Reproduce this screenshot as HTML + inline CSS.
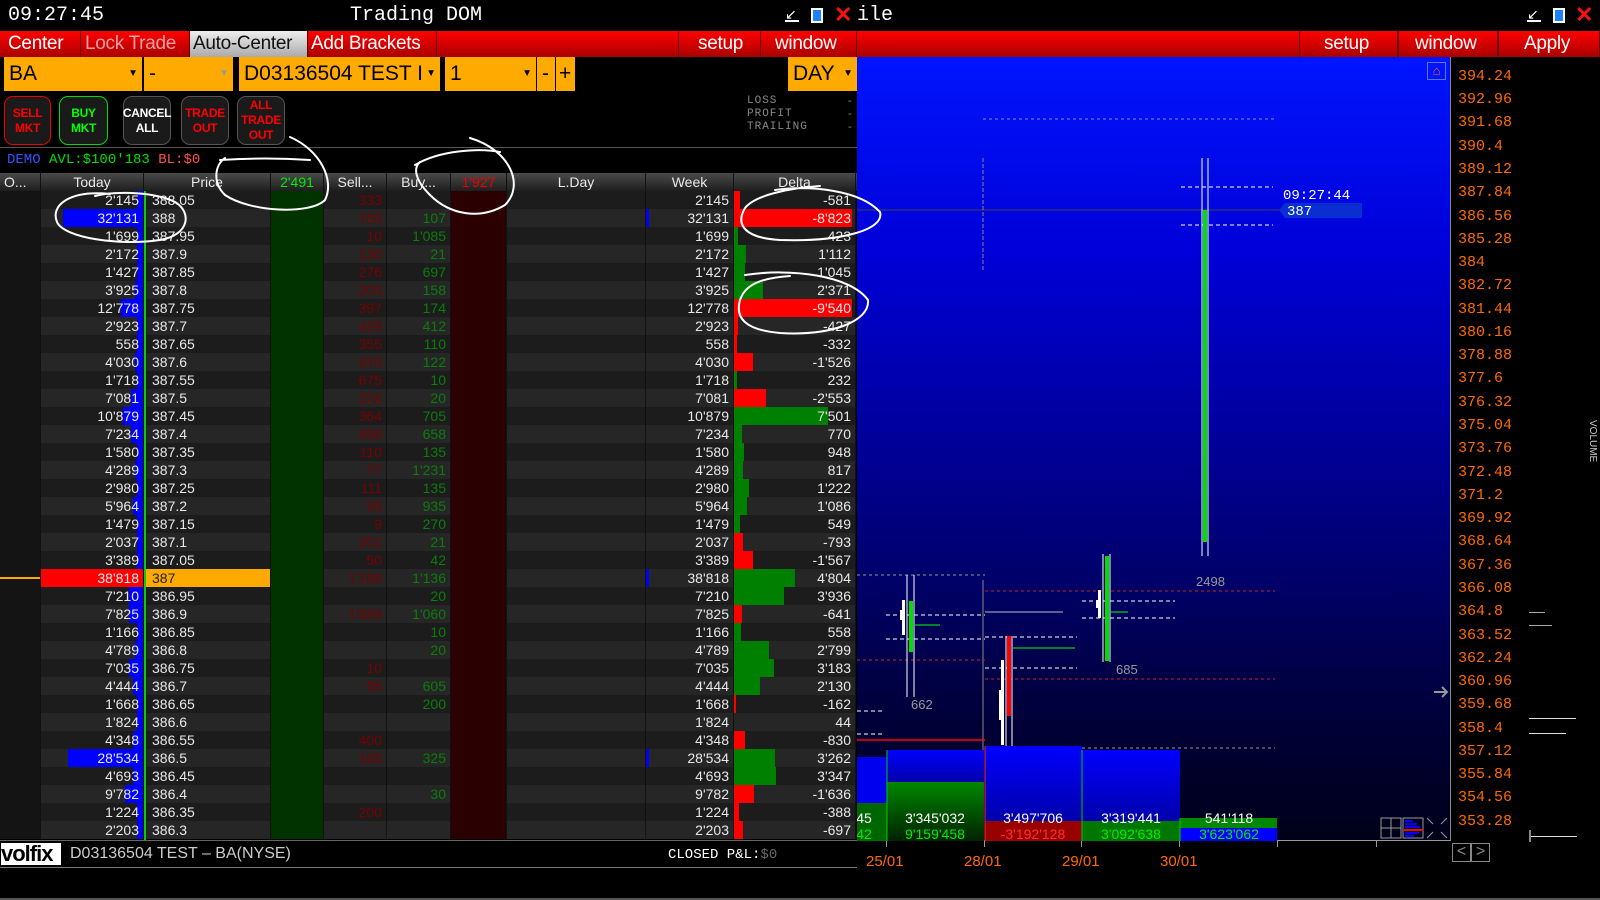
<!DOCTYPE html>
<html><head><meta charset="utf-8"><style>
*{margin:0;padding:0;box-sizing:border-box}
body{width:1600px;height:900px;background:#000;position:relative;overflow:hidden;font-family:"Liberation Sans",sans-serif;color:#e8e8e8}
.a{position:absolute}
.mono{font-family:"Liberation Mono","DejaVu Sans Mono",monospace}
.menu{position:absolute;top:31px;height:26px;background:linear-gradient(#ff0000,#a80000);font-size:19px;line-height:26px;color:#fff;padding-left:8px;border-right:1px solid #600;white-space:nowrap;overflow:hidden;letter-spacing:-0.3px}
.org{position:absolute;top:57px;height:34px;background:#ffaa00;color:#000;font-size:21px;line-height:34px;padding-left:5px;white-space:nowrap;overflow:hidden}
.org .ar{position:absolute;right:4px;top:0;font-size:10px;background:#ffaa00}
.btn{position:absolute;top:96px;height:49px;border-radius:9px;background:#1a1a1a;font-size:12px;line-height:15px;text-align:center;display:flex;align-items:center;justify-content:center;font-weight:bold;letter-spacing:-0.3px}
.r{display:flex;height:18px;font-size:14px;line-height:18px}
.r:nth-child(odd) i{background:#1c1c1c}
.r:nth-child(even) i{background:#262626}
.r i{font-style:normal;position:relative;display:block;border-right:1px solid #111;text-align:right;padding-right:4px;overflow:hidden;white-space:nowrap}
.r i s{text-decoration:none;position:relative}
.o{width:41px}.r .o{background:#141414!important}
.t{width:103px}.p{width:127px;text-align:left!important;padding-left:8px}
.r .g{width:53px;background:#003300!important}.s{width:63px;color:#780000}.b{width:64px;color:#0b7d0b}
.r .rd{width:56px;background:#2a0000!important}.l{width:139px}.w{width:88px}.d{width:122px}
.t b{position:absolute;right:0;top:0;height:18px;background:#0000ff}
.d b{position:absolute;left:0;top:0;height:18px;background:#008000}
.d b.n{background:#ff0000}
.w b{position:absolute;left:0;top:0;width:3px;height:18px;background:#0000ff}
.hd{display:flex;height:18px;font-size:14px;line-height:18px;background:linear-gradient(#4a4a4a,#1e1e1e)}
.hd i{font-style:normal;display:block;text-align:center;border-right:1px solid #111;white-space:nowrap;overflow:hidden}
.ax{position:absolute;left:1458px;color:#ff6a00;font-size:15px;font-family:"Liberation Mono",monospace}
</style></head><body>
<div class="a mono" style="left:8px;top:4px;font-size:20px;color:#fff">09:27:45</div>
<div class="a mono" style="left:350px;top:4px;font-size:20px;color:#fff">Trading DOM</div>
<div class="a" style="left:785px;top:8px;width:14px;height:14px;border-bottom:2px solid #fff;color:#fff;font-size:14px;line-height:12px">↙</div>
<div class="a" style="left:811px;top:8px;width:12px;height:15px;background:#1e7fff;border:2px solid #fff"></div>
<div class="a" style="left:834px;top:2px;color:#ff1010;font-size:22px;font-weight:bold">✕</div>
<div class="a mono" style="left:857px;top:4px;font-size:20px;color:#fff">ile</div>
<div class="a" style="left:1527px;top:8px;width:14px;height:14px;border-bottom:2px solid #fff;color:#fff;font-size:14px;line-height:12px">↙</div>
<div class="a" style="left:1553px;top:8px;width:12px;height:15px;background:#1e7fff;border:2px solid #fff"></div>
<div class="a" style="left:1575px;top:2px;color:#ff1010;font-size:22px;font-weight:bold">✕</div>
<div class="a" style="left:0;top:31px;width:1600px;height:26px;background:linear-gradient(#ff0000,#a80000)"></div>
<div class="menu" style="left:0;width:81px">Center</div>
<div class="menu" style="left:81px;width:109px;color:#e8a0a0;padding-left:4px">Lock Trade</div>
<div class="menu" style="left:190px;width:118px;background:linear-gradient(#eee,#aaa);color:#111;padding-left:3px">Auto-Center</div>
<div class="menu" style="left:308px;width:129px;padding-left:3px">Add Brackets</div>
<div class="menu" style="left:678px;width:83px;padding-left:19px;border-left:1px solid #600">setup</div>
<div class="menu" style="left:761px;width:96px;padding-left:14px">window</div>
<div class="menu" style="left:1299px;width:99px;padding-left:24px;border-left:1px solid #600">setup</div>
<div class="menu" style="left:1398px;width:100px;padding-left:16px;border-left:1px solid #600">window</div>
<div class="menu" style="left:1498px;width:102px;padding-left:25px;border-left:1px solid #600">Apply</div>
<div class="org" style="left:4px;width:138px">BA<span class="ar">▼</span></div>
<div class="org" style="left:144px;width:89px">-<span class="ar" style="color:#999">▼</span></div>
<div class="org" style="left:239px;width:201px">D03136504 TEST I<span class="ar">▼</span></div>
<div class="org" style="left:445px;width:91px">1<span class="ar">▼</span></div>
<div class="org" style="left:537px;width:18px">-</div>
<div class="org" style="left:556px;width:19px;padding-left:3px">+</div>
<div class="org" style="left:788px;width:69px">DAY<span class="ar">▼</span></div>
<div class="btn" style="left:4px;width:47px;border:1px solid #e00;color:#f00">SELL<br>MKT</div>
<div class="btn" style="left:59px;width:49px;border:1px solid #0d0;color:#0f0">BUY<br>MKT</div>
<div class="btn" style="left:123px;width:48px;border:1px solid #555;color:#fff">CANCEL<br>ALL</div>
<div class="btn" style="left:181px;width:48px;border:1px solid #555;color:#f00">TRADE<br>OUT</div>
<div class="btn" style="left:237px;width:48px;border:1px solid #555;color:#f00">ALL<br>TRADE<br>OUT</div>
<div class="a mono" style="left:747px;top:95px;font-size:11px;line-height:13px;color:#888;letter-spacing:1px">LOSS<br>PROFIT<br>TRAILING</div>
<div class="a" style="left:848px;top:95px;font-size:11px;line-height:13px;color:#888">-<br>-<br>-</div>
<div class="a" style="left:0;top:147px;width:857px;height:1px;background:#555"></div>
<div class="a mono" style="left:7px;top:152px;font-size:14px"><span style="color:#3355ff">DEMO</span> <span style="color:#00e000">AVL:$100'183</span> <span style="color:#ff5050">BL:$0</span></div>
<div class="a" style="left:0;top:173px;width:857px">
<div class="hd"><i style="width:41px;text-align:left;padding-left:4px">O...</i><i style="width:103px">Today</i><i style="width:127px">Price</i><i style="width:53px;color:#0e0">2'491</i><i style="width:63px">Sell...</i><i style="width:64px">Buy...</i><i style="width:56px;color:#e00">1'927</i><i style="width:139px">L.Day</i><i style="width:88px">Week</i><i style="width:122px">Delta</i></div>
<div>
<div class="r"><i class="o"></i><i class="t"><b style="width:6px"></b><s>2'145</s></i><i class="p">388.05</i><i class="g"></i><i class="s">333</i><i class="b"></i><i class="rd"></i><i class="l"></i><i class="w">2'145</i><i class="d"><b class="n" style="width:6px"></b><s>-581</s></i></div>
<div class="r"><i class="o"></i><i class="t"><b style="width:80px"></b><s>32'131</s></i><i class="p">388</i><i class="g"></i><i class="s">745</i><i class="b">107</i><i class="rd"></i><i class="l"></i><i class="w"><b></b>32'131</i><i class="d"><b class="n" style="width:118px"></b><s>-8'823</s></i></div>
<div class="r"><i class="o"></i><i class="t"><b style="width:6px"></b><s>1'699</s></i><i class="p">387.95</i><i class="g"></i><i class="s">10</i><i class="b">1'085</i><i class="rd"></i><i class="l"></i><i class="w">1'699</i><i class="d"><b style="width:4px"></b><s>423</s></i></div>
<div class="r"><i class="o"></i><i class="t"><b style="width:6px"></b><s>2'172</s></i><i class="p">387.9</i><i class="g"></i><i class="s">130</i><i class="b">21</i><i class="rd"></i><i class="l"></i><i class="w">2'172</i><i class="d"><b style="width:12px"></b><s>1'112</s></i></div>
<div class="r"><i class="o"></i><i class="t"><b style="width:6px"></b><s>1'427</s></i><i class="p">387.85</i><i class="g"></i><i class="s">276</i><i class="b">697</i><i class="rd"></i><i class="l"></i><i class="w">1'427</i><i class="d"><b style="width:11px"></b><s>1'045</s></i></div>
<div class="r"><i class="o"></i><i class="t"><b style="width:8px"></b><s>3'925</s></i><i class="p">387.8</i><i class="g"></i><i class="s">205</i><i class="b">158</i><i class="rd"></i><i class="l"></i><i class="w">3'925</i><i class="d"><b style="width:29px"></b><s>2'371</s></i></div>
<div class="r"><i class="o"></i><i class="t"><b style="width:22px"></b><s>12'778</s></i><i class="p">387.75</i><i class="g"></i><i class="s">397</i><i class="b">174</i><i class="rd"></i><i class="l"></i><i class="w">12'778</i><i class="d"><b class="n" style="width:118px"></b><s>-9'540</s></i></div>
<div class="r"><i class="o"></i><i class="t"><b style="width:6px"></b><s>2'923</s></i><i class="p">387.7</i><i class="g"></i><i class="s">429</i><i class="b">412</i><i class="rd"></i><i class="l"></i><i class="w">2'923</i><i class="d"><b class="n" style="width:4px"></b><s>-427</s></i></div>
<div class="r"><i class="o"></i><i class="t"><b style="width:6px"></b><s>558</s></i><i class="p">387.65</i><i class="g"></i><i class="s">355</i><i class="b">110</i><i class="rd"></i><i class="l"></i><i class="w">558</i><i class="d"><b class="n" style="width:3px"></b><s>-332</s></i></div>
<div class="r"><i class="o"></i><i class="t"><b style="width:8px"></b><s>4'030</s></i><i class="p">387.6</i><i class="g"></i><i class="s">970</i><i class="b">122</i><i class="rd"></i><i class="l"></i><i class="w">4'030</i><i class="d"><b class="n" style="width:19px"></b><s>-1'526</s></i></div>
<div class="r"><i class="o"></i><i class="t"><b style="width:6px"></b><s>1'718</s></i><i class="p">387.55</i><i class="g"></i><i class="s">675</i><i class="b">10</i><i class="rd"></i><i class="l"></i><i class="w">1'718</i><i class="d"><b style="width:3px"></b><s>232</s></i></div>
<div class="r"><i class="o"></i><i class="t"><b style="width:12px"></b><s>7'081</s></i><i class="p">387.5</i><i class="g"></i><i class="s">224</i><i class="b">20</i><i class="rd"></i><i class="l"></i><i class="w">7'081</i><i class="d"><b class="n" style="width:32px"></b><s>-2'553</s></i></div>
<div class="r"><i class="o"></i><i class="t"><b style="width:20px"></b><s>10'879</s></i><i class="p">387.45</i><i class="g"></i><i class="s">364</i><i class="b">705</i><i class="rd"></i><i class="l"></i><i class="w">10'879</i><i class="d"><b style="width:94px"></b><s>7'501</s></i></div>
<div class="r"><i class="o"></i><i class="t"><b style="width:12px"></b><s>7'234</s></i><i class="p">387.4</i><i class="g"></i><i class="s">456</i><i class="b">658</i><i class="rd"></i><i class="l"></i><i class="w">7'234</i><i class="d"><b style="width:8px"></b><s>770</s></i></div>
<div class="r"><i class="o"></i><i class="t"><b style="width:6px"></b><s>1'580</s></i><i class="p">387.35</i><i class="g"></i><i class="s">110</i><i class="b">135</i><i class="rd"></i><i class="l"></i><i class="w">1'580</i><i class="d"><b style="width:10px"></b><s>948</s></i></div>
<div class="r"><i class="o"></i><i class="t"><b style="width:8px"></b><s>4'289</s></i><i class="p">387.3</i><i class="g"></i><i class="s">77</i><i class="b">1'231</i><i class="rd"></i><i class="l"></i><i class="w">4'289</i><i class="d"><b style="width:9px"></b><s>817</s></i></div>
<div class="r"><i class="o"></i><i class="t"><b style="width:6px"></b><s>2'980</s></i><i class="p">387.25</i><i class="g"></i><i class="s">111</i><i class="b">135</i><i class="rd"></i><i class="l"></i><i class="w">2'980</i><i class="d"><b style="width:15px"></b><s>1'222</s></i></div>
<div class="r"><i class="o"></i><i class="t"><b style="width:10px"></b><s>5'964</s></i><i class="p">387.2</i><i class="g"></i><i class="s">95</i><i class="b">935</i><i class="rd"></i><i class="l"></i><i class="w">5'964</i><i class="d"><b style="width:13px"></b><s>1'086</s></i></div>
<div class="r"><i class="o"></i><i class="t"><b style="width:6px"></b><s>1'479</s></i><i class="p">387.15</i><i class="g"></i><i class="s">9</i><i class="b">270</i><i class="rd"></i><i class="l"></i><i class="w">1'479</i><i class="d"><b style="width:6px"></b><s>549</s></i></div>
<div class="r"><i class="o"></i><i class="t"><b style="width:6px"></b><s>2'037</s></i><i class="p">387.1</i><i class="g"></i><i class="s">201</i><i class="b">21</i><i class="rd"></i><i class="l"></i><i class="w">2'037</i><i class="d"><b class="n" style="width:9px"></b><s>-793</s></i></div>
<div class="r"><i class="o"></i><i class="t"><b style="width:6px"></b><s>3'389</s></i><i class="p">387.05</i><i class="g"></i><i class="s">50</i><i class="b">42</i><i class="rd"></i><i class="l"></i><i class="w">3'389</i><i class="d"><b class="n" style="width:19px"></b><s>-1'567</s></i></div>
<div class="r"><i class="o"><span style="position:absolute;left:0;top:8px;width:41px;height:2px;background:#ffaa00"></span></i><i class="t"><b style="width:103px;background:#ff0000"></b><s>38'818</s></i><i class="p" style="background:#ffaa00!important;color:#222">387</i><i class="g"></i><i class="s">1'188</i><i class="b">1'136</i><i class="rd"></i><i class="l"></i><i class="w"><b></b>38'818</i><i class="d"><b style="width:61px"></b><s>4'804</s></i></div>
<div class="r"><i class="o"></i><i class="t"><b style="width:14px"></b><s>7'210</s></i><i class="p">386.95</i><i class="g"></i><i class="s"></i><i class="b">20</i><i class="rd"></i><i class="l"></i><i class="w">7'210</i><i class="d"><b style="width:50px"></b><s>3'936</s></i></div>
<div class="r"><i class="o"></i><i class="t"><b style="width:14px"></b><s>7'825</s></i><i class="p">386.9</i><i class="g"></i><i class="s">1'689</i><i class="b">1'060</i><i class="rd"></i><i class="l"></i><i class="w">7'825</i><i class="d"><b class="n" style="width:8px"></b><s>-641</s></i></div>
<div class="r"><i class="o"></i><i class="t"><b style="width:6px"></b><s>1'166</s></i><i class="p">386.85</i><i class="g"></i><i class="s"></i><i class="b">10</i><i class="rd"></i><i class="l"></i><i class="w">1'166</i><i class="d"><b style="width:7px"></b><s>558</s></i></div>
<div class="r"><i class="o"></i><i class="t"><b style="width:8px"></b><s>4'789</s></i><i class="p">386.8</i><i class="g"></i><i class="s"></i><i class="b">20</i><i class="rd"></i><i class="l"></i><i class="w">4'789</i><i class="d"><b style="width:35px"></b><s>2'799</s></i></div>
<div class="r"><i class="o"></i><i class="t"><b style="width:14px"></b><s>7'035</s></i><i class="p">386.75</i><i class="g"></i><i class="s">10</i><i class="b"></i><i class="rd"></i><i class="l"></i><i class="w">7'035</i><i class="d"><b style="width:40px"></b><s>3'183</s></i></div>
<div class="r"><i class="o"></i><i class="t"><b style="width:10px"></b><s>4'444</s></i><i class="p">386.7</i><i class="g"></i><i class="s">95</i><i class="b">605</i><i class="rd"></i><i class="l"></i><i class="w">4'444</i><i class="d"><b style="width:26px"></b><s>2'130</s></i></div>
<div class="r"><i class="o"></i><i class="t"><b style="width:6px"></b><s>1'668</s></i><i class="p">386.65</i><i class="g"></i><i class="s"></i><i class="b">200</i><i class="rd"></i><i class="l"></i><i class="w">1'668</i><i class="d"><b class="n" style="width:2px"></b><s>-162</s></i></div>
<div class="r"><i class="o"></i><i class="t"><b style="width:6px"></b><s>1'824</s></i><i class="p">386.6</i><i class="g"></i><i class="s"></i><i class="b"></i><i class="rd"></i><i class="l"></i><i class="w">1'824</i><i class="d"><s>44</s></i></div>
<div class="r"><i class="o"></i><i class="t"><b style="width:10px"></b><s>4'348</s></i><i class="p">386.55</i><i class="g"></i><i class="s">400</i><i class="b"></i><i class="rd"></i><i class="l"></i><i class="w">4'348</i><i class="d"><b class="n" style="width:11px"></b><s>-830</s></i></div>
<div class="r"><i class="o"></i><i class="t"><b style="width:75px"></b><s>28'534</s></i><i class="p">386.5</i><i class="g"></i><i class="s">165</i><i class="b">325</i><i class="rd"></i><i class="l"></i><i class="w"><b></b>28'534</i><i class="d"><b style="width:41px"></b><s>3'262</s></i></div>
<div class="r"><i class="o"></i><i class="t"><b style="width:10px"></b><s>4'693</s></i><i class="p">386.45</i><i class="g"></i><i class="s"></i><i class="b"></i><i class="rd"></i><i class="l"></i><i class="w">4'693</i><i class="d"><b style="width:42px"></b><s>3'347</s></i></div>
<div class="r"><i class="o"></i><i class="t"><b style="width:18px"></b><s>9'782</s></i><i class="p">386.4</i><i class="g"></i><i class="s"></i><i class="b">30</i><i class="rd"></i><i class="l"></i><i class="w">9'782</i><i class="d"><b class="n" style="width:20px"></b><s>-1'636</s></i></div>
<div class="r"><i class="o"></i><i class="t"><b style="width:6px"></b><s>1'224</s></i><i class="p">386.35</i><i class="g"></i><i class="s">200</i><i class="b"></i><i class="rd"></i><i class="l"></i><i class="w">1'224</i><i class="d"><b class="n" style="width:5px"></b><s>-388</s></i></div>
<div class="r"><i class="o"></i><i class="t"><b style="width:6px"></b><s>2'203</s></i><i class="p">386.3</i><i class="g"></i><i class="s"></i><i class="b"></i><i class="rd"></i><i class="l"></i><i class="w">2'203</i><i class="d"><b class="n" style="width:9px"></b><s>-697</s></i></div>
</div></div>
<div class="a" style="left:144px;top:191px;width:2px;height:649px;background:#00d000"></div>
<div class="a" style="left:0;top:840px;width:857px;height:1px;background:#666"></div>
<div class="a" style="left:0;top:841px;width:857px;height:27px;background:#000;border-bottom:1px solid #777"></div>
<div class="a" style="left:1px;top:843px;width:60px;height:22px;background:#fff;color:#000;font-weight:bold;font-size:22px;line-height:22px;letter-spacing:-1px">volfix</div>
<div class="a" style="left:70px;top:845px;font-size:16px;color:#ccc">D03136504 TEST – BA(NYSE)</div>
<div class="a mono" style="left:668px;top:847px;font-size:14px;color:#fff">CLOSED P&amp;L:<span style="color:#666">$0</span></div>
<div class="a" style="left:0;top:898px;width:1600px;height:2px;background:#555"></div>
<div class="a" style="left:857px;top:57px;width:593px;height:783px;background:linear-gradient(#0015ff 0%,#0000d8 25%,#00008a 55%,#000044 80%,#000018 100%)"></div>
<div class="a" style="left:1450px;top:57px;width:1px;height:785px;background:#888"></div>
<div class="a" style="left:857px;top:840px;width:594px;height:1px;background:#999"></div>
<div class="a" style="left:1427px;top:62px;width:19px;height:18px;border:1px solid #5577ff;color:#ff6600;font-size:13px;text-align:center">⌂</div>
<svg class="a" style="left:857px;top:57px" width="595" height="800" viewBox="857 57 595 800">
<g fill="none" stroke-width="1">
<line x1="983" y1="119" x2="1275" y2="119" stroke="#8888ff" stroke-dasharray="3,3"/>
<line x1="857" y1="210" x2="1279" y2="210" stroke="#444"/>
<line x1="983" y1="158" x2="983" y2="270" stroke="#888" stroke-dasharray="4,2"/>
<line x1="983" y1="580" x2="983" y2="840" stroke="#888"/>
<line x1="1181" y1="187" x2="1273" y2="187" stroke="#fff" stroke-dasharray="4,3"/>
<line x1="1181" y1="225" x2="1273" y2="225" stroke="#fff" stroke-dasharray="4,3"/>
<line x1="1202" y1="158" x2="1202" y2="556" stroke="#fff"/>
<line x1="1208" y1="158" x2="1208" y2="556" stroke="#fff"/>
<line x1="857" y1="575" x2="985" y2="575" stroke="#999" stroke-dasharray="3,3"/>
<line x1="985" y1="591" x2="1275" y2="591" stroke="#cc2222" stroke-dasharray="3,3"/>
<line x1="985" y1="679" x2="1275" y2="679" stroke="#cc2222" stroke-dasharray="3,3"/>
<line x1="857" y1="660" x2="985" y2="660" stroke="#cc2222" stroke-dasharray="3,3"/>
<line x1="857" y1="740" x2="985" y2="740" stroke="#ff0000" stroke-width="1.5"/>
<line x1="1082" y1="748" x2="1275" y2="748" stroke="#999" stroke-dasharray="3,3"/>
<line x1="886" y1="615" x2="985" y2="615" stroke="#fff" stroke-dasharray="4,3"/>
<line x1="886" y1="639" x2="985" y2="639" stroke="#fff" stroke-dasharray="4,3"/>
<line x1="857" y1="711" x2="884" y2="711" stroke="#fff" stroke-dasharray="4,3"/>
<line x1="857" y1="734" x2="884" y2="734" stroke="#fff" stroke-dasharray="4,3"/>
<line x1="985" y1="637" x2="1077" y2="637" stroke="#fff" stroke-dasharray="4,3"/>
<line x1="985" y1="668" x2="1077" y2="668" stroke="#fff" stroke-dasharray="4,3"/>
<line x1="1082" y1="601" x2="1175" y2="601" stroke="#fff" stroke-dasharray="4,3"/>
<line x1="1082" y1="618" x2="1175" y2="618" stroke="#fff" stroke-dasharray="4,3"/>
<line x1="985" y1="612" x2="1063" y2="612" stroke="#bbb"/>
<line x1="915" y1="625" x2="940" y2="625" stroke="#0f0"/>
<line x1="1013" y1="648" x2="1075" y2="648" stroke="#0f0"/>
<line x1="1111" y1="612" x2="1128" y2="612" stroke="#0f0"/>
<line x1="907" y1="575" x2="907" y2="697" stroke="#fff"/><line x1="914" y1="575" x2="914" y2="697" stroke="#fff"/>
<line x1="1006" y1="636" x2="1006" y2="750" stroke="#fff"/><line x1="1012" y1="636" x2="1012" y2="750" stroke="#fff"/>
<line x1="1103" y1="554" x2="1103" y2="662" stroke="#fff"/><line x1="1110" y1="554" x2="1110" y2="662" stroke="#fff"/>
</g>
<rect x="1203" y="210" width="4" height="332" fill="#00e000"/>
<rect x="909" y="601" width="4" height="51" fill="#00e000"/>
<rect x="1007" y="636" width="4" height="80" fill="#ff0000"/>
<rect x="1105" y="556" width="4" height="105" fill="#00e000"/>
<path d="M905 600h-3v10h-2v10h2v15h3z M1004 660h-3v30h-2v30h2v25h3z M1101 590h-3v10h-2v8h2v10h3z" fill="#fff"/>
<path d="M1279 210 l6 -7 h77 v15 h-77z" fill="#0a2fd0"/>
<text x="1283" y="199" fill="#fff" font-family="Liberation Mono" font-size="14">09:27:44</text>
<text x="1287" y="215" fill="#fff" font-family="Liberation Mono" font-size="14">387</text>
<g fill="#999" font-family="Liberation Sans" font-size="13"><text x="911" y="709">662</text><text x="1019" y="761">608</text><text x="1116" y="674">685</text><text x="1196" y="586">2498</text></g>
<rect x="857" y="757" width="30" height="46" fill="#0000ee"/><rect x="857" y="803" width="30" height="38" fill="#006600"/>
<defs><linearGradient id="gg" x1="0" y1="0" x2="0" y2="1"><stop offset="0" stop-color="#008800"/><stop offset="1" stop-color="#002200"/></linearGradient><linearGradient id="bb" x1="0" y1="0" x2="0" y2="1"><stop offset="0" stop-color="#0000ff"/><stop offset="1" stop-color="#0000aa"/></linearGradient></defs>
<rect x="887" y="750" width="97" height="32" fill="url(#bb)"/><rect x="887" y="782" width="97" height="59" fill="url(#gg)"/>
<rect x="985" y="746" width="97" height="75" fill="url(#bb)"/><rect x="985" y="821" width="97" height="20" fill="#990000"/>
<rect x="1082" y="750" width="98" height="71" fill="url(#bb)"/><rect x="1082" y="821" width="98" height="20" fill="#007700"/>
<rect x="1180" y="818" width="97" height="10" fill="#008800"/><rect x="1180" y="828" width="97" height="13" fill="#0000ff"/>
<g stroke="#00cc00"><line x1="887" y1="750" x2="887" y2="841"/><line x1="1082" y1="750" x2="1082" y2="841"/><line x1="1180" y1="818" x2="1180" y2="841"/></g>
<line x1="985" y1="746" x2="985" y2="841" stroke="#ff2222"/>
<g font-family="Liberation Sans" font-size="14" text-anchor="middle">
<text x="935" y="823" fill="#fff">3'345'032</text><text x="935" y="839" fill="#00ee00">9'159'458</text>
<text x="1033" y="823" fill="#fff">3'497'706</text><text x="1033" y="839" fill="#ff3030">-3'192'128</text>
<text x="1131" y="823" fill="#fff">3'319'441</text><text x="1131" y="839" fill="#00ee00">3'092'638</text>
<text x="1229" y="823" fill="#fff">541'118</text><text x="1229" y="839" fill="#00ee00">3'623'062</text>
<text x="864" y="823" fill="#fff">45</text><text x="864" y="839" fill="#00ee00">42</text></g>
<g stroke="#999"><rect x="1381" y="818" width="20" height="20" fill="none"/><line x1="1391" y1="818" x2="1391" y2="838"/><line x1="1381" y1="828" x2="1401" y2="828"/><rect x="1403" y="818" width="20" height="20" fill="none"/></g>
<g fill="#0000ff"><rect x="1405" y="820" width="8" height="2"/><rect x="1405" y="823" width="12" height="2"/><rect x="1405" y="826" width="15" height="2"/><rect x="1405" y="832" width="14" height="2"/><rect x="1405" y="835" width="9" height="2"/></g><rect x="1404" y="829" width="19" height="2" fill="#f00"/>
<g stroke="#999" fill="none"><path d="M1427 818l6 6M1447 818l-6 6M1427 838l6-6M1447 838l-6-6"/></g>
<path d="M1434 692h12M1442 687l5 5-5 5" stroke="#999" fill="none" stroke-width="2"/>
</svg>
<div class="a" style="left:857px;top:841px;width:594px;height:26px;background:#000"></div>
<div class="a" style="left:886px;top:841px;width:1px;height:6px;background:#999"></div><div class="a" style="left:984px;top:841px;width:1px;height:6px;background:#999"></div><div class="a" style="left:1081px;top:841px;width:1px;height:6px;background:#999"></div><div class="a" style="left:1179px;top:841px;width:1px;height:6px;background:#999"></div><div class="a" style="left:1277px;top:841px;width:1px;height:6px;background:#999"></div><div class="a" style="left:1376px;top:841px;width:1px;height:6px;background:#999"></div>
<div class="a" style="top:853px;left:866px;color:#ff6a00;font-size:15px">25/01</div>
<div class="a" style="top:853px;left:964px;color:#ff6a00;font-size:15px">28/01</div>
<div class="a" style="top:853px;left:1062px;color:#ff6a00;font-size:15px">29/01</div>
<div class="a" style="top:853px;left:1160px;color:#ff6a00;font-size:15px">30/01</div>
<div class="a" style="left:1452px;top:843px;width:19px;height:19px;border:1px solid #888;color:#888;font-size:16px;line-height:16px;text-align:center">&lt;</div>
<div class="a" style="left:1471px;top:843px;width:19px;height:19px;border:1px solid #888;color:#888;font-size:16px;line-height:16px;text-align:center">&gt;</div>
<div class="ax" style="top:68px">394.24</div><div class="ax" style="top:91px">392.96</div><div class="ax" style="top:114px">391.68</div><div class="ax" style="top:138px">390.4</div><div class="ax" style="top:161px">389.12</div><div class="ax" style="top:184px">387.84</div><div class="ax" style="top:208px">386.56</div><div class="ax" style="top:231px">385.28</div><div class="ax" style="top:254px">384</div><div class="ax" style="top:277px">382.72</div><div class="ax" style="top:301px">381.44</div><div class="ax" style="top:324px">380.16</div><div class="ax" style="top:347px">378.88</div><div class="ax" style="top:370px">377.6</div><div class="ax" style="top:394px">376.32</div><div class="ax" style="top:417px">375.04</div><div class="ax" style="top:440px">373.76</div><div class="ax" style="top:464px">372.48</div><div class="ax" style="top:487px">371.2</div><div class="ax" style="top:510px">369.92</div><div class="ax" style="top:533px">368.64</div><div class="ax" style="top:557px">367.36</div><div class="ax" style="top:580px">366.08</div><div class="ax" style="top:603px">364.8</div><div class="ax" style="top:627px">363.52</div><div class="ax" style="top:650px">362.24</div><div class="ax" style="top:673px">360.96</div><div class="ax" style="top:696px">359.68</div><div class="ax" style="top:720px">358.4</div><div class="ax" style="top:743px">357.12</div><div class="ax" style="top:766px">355.84</div><div class="ax" style="top:789px">354.56</div><div class="ax" style="top:813px">353.28</div>
<div class="a" style="left:1587px;top:420px;color:#ccc;font-size:10px;writing-mode:vertical-rl">VOLUME</div>
<div class="a" style="left:1529px;top:612px;width:16px;height:1px;background:#aaa"></div>
<div class="a" style="left:1529px;top:625px;width:23px;height:1px;background:#aaa"></div>
<div class="a" style="left:1529px;top:718px;width:47px;height:1px;background:#ddd"></div>
<div class="a" style="left:1529px;top:733px;width:37px;height:1px;background:#ddd"></div>
<div class="a" style="left:1529px;top:836px;width:48px;height:1px;background:#ddd"></div>
<div class="a" style="left:1529px;top:830px;width:2px;height:12px;background:#888"></div>
<svg class="a" style="left:0;top:0" width="1600" height="900"><g fill="none" stroke="#fff" stroke-width="2" stroke-linecap="round">
<path d="M110 194 C70 190 50 205 57 222 C64 238 120 246 160 240 C190 235 192 212 175 202 C150 190 110 192 95 196"/>
<path d="M220 160 C250 158 280 158 310 160 M290 137 C320 150 335 180 325 200 C310 215 250 212 225 195 C212 182 215 165 225 158"/>
<path d="M415 165 C440 150 480 148 500 152 M470 138 C510 150 525 185 505 205 C480 220 450 215 430 195 C415 180 413 168 420 162"/>
<path d="M775 190 C810 185 860 190 880 212 C885 230 840 242 780 240 C745 238 735 225 745 208 C755 195 790 188 820 186"/>
<path d="M745 275 C790 268 850 275 868 300 C870 322 830 336 780 333 C745 330 735 318 740 300 C745 285 760 278 790 276"/>
</g></svg>
</body></html>
